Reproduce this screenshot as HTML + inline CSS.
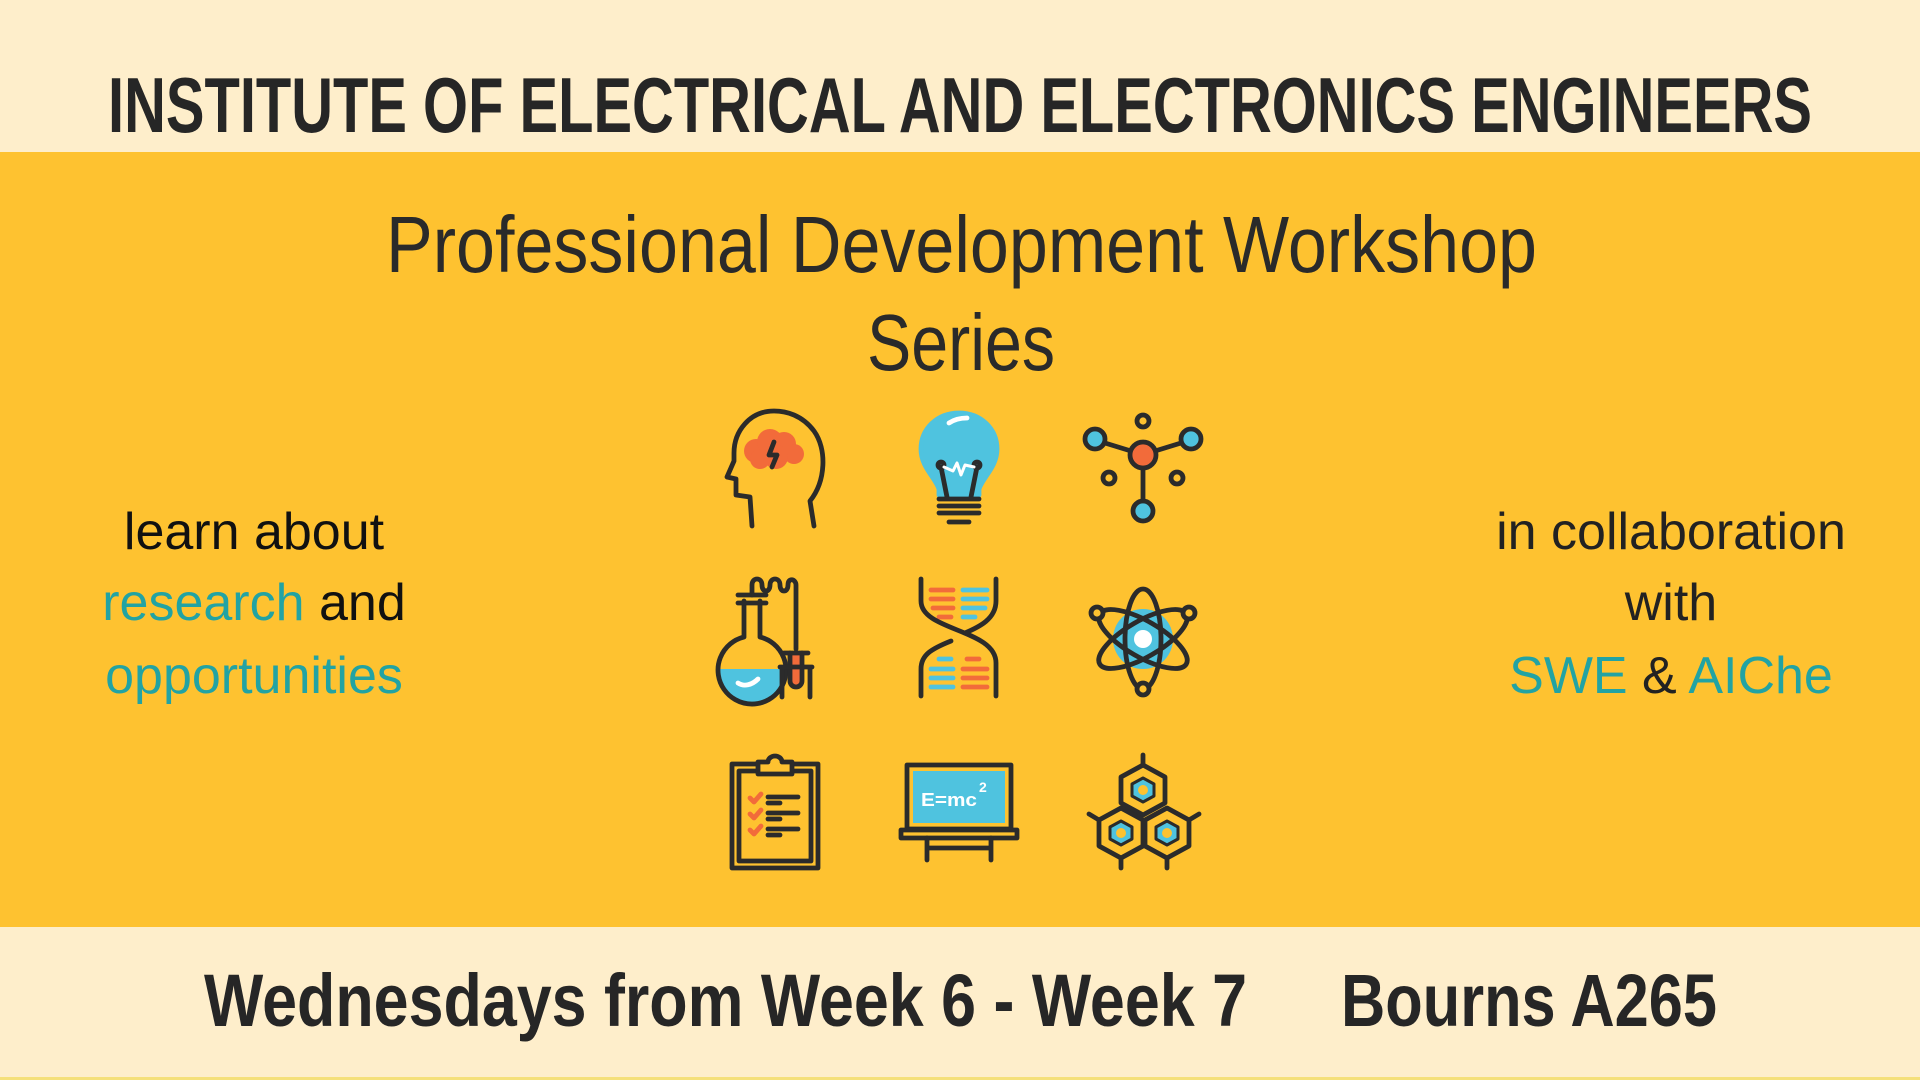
<!DOCTYPE html>
<html><head><meta charset="utf-8"><style>
html,body{margin:0;padding:0;width:1920px;height:1080px;overflow:hidden;background:#FEC230}
svg{display:block}
</style></head><body>
<svg width="1920" height="1080" viewBox="0 0 1920 1080" xmlns="http://www.w3.org/2000/svg" font-family="Liberation Sans, sans-serif">
<rect x="0" y="0" width="1920" height="152" fill="#FEEECB"/>
<rect x="0" y="152" width="1920" height="775" fill="#FEC230"/>
<rect x="0" y="927" width="1920" height="153" fill="#FEEECB"/>
<rect x="0" y="1077" width="1920" height="3" fill="#F5E07A"/>

<text x="108" y="132" font-size="78" font-weight="bold" fill="#262626" textLength="1704" lengthAdjust="spacingAndGlyphs">INSTITUTE OF ELECTRICAL AND ELECTRONICS ENGINEERS</text>
<text x="386" y="272" font-size="80" fill="#2a2a2a" textLength="1151" lengthAdjust="spacingAndGlyphs">Professional Development Workshop</text>
<text x="867" y="370" font-size="80" fill="#2a2a2a" textLength="188" lengthAdjust="spacingAndGlyphs">Series</text>

<g font-size="52" text-anchor="middle">
<text x="254" y="549" fill="#111">learn about</text>
<text x="254" y="620"><tspan fill="#22A3A3">research</tspan><tspan fill="#111"> and</tspan></text>
<text x="254" y="693" fill="#22A3A3">opportunities</text>
<text x="1671" y="549" fill="#222">in collaboration</text>
<text x="1671" y="620" fill="#222">with</text>
<text x="1671" y="693"><tspan fill="#22A3A3">SWE</tspan><tspan fill="#222"> &amp; </tspan><tspan fill="#22A3A3">AIChe</tspan></text>
</g>

<text x="204" y="1026" font-size="74" font-weight="bold" fill="#262626" textLength="1043" lengthAdjust="spacingAndGlyphs">Wednesdays from Week 6 - Week 7</text>
<text x="1341" y="1026" font-size="74" font-weight="bold" fill="#262626" textLength="376" lengthAdjust="spacingAndGlyphs">Bourns A265</text>

<g fill="none" stroke="#2b2b2b" stroke-width="4.8" stroke-linecap="round" stroke-linejoin="round">
<!-- head -->
<g transform="translate(714,409)">
 <g fill="#F26B3A" stroke="none">
  <circle cx="42" cy="42" r="12"/><circle cx="56" cy="33" r="13"/><circle cx="70" cy="35" r="12"/><circle cx="80" cy="45" r="10"/><circle cx="62" cy="48" r="12"/><circle cx="46" cy="50" r="10"/>
 </g>
 <path d="M60,33 L55,46 L63,46 L58,58"/>
 <path d="M100,117 L96,92 C112,72 113,40 100,22 C88,6 72,2 60,2 C36,2 20,22 20,44 L20,52 L13,68 L22,70 L22,86 L36,88 L38,117"/>
</g>
<!-- bulb -->
<g transform="translate(899,409)">
 <path d="M60,4 C38,4 22,20 22,40 C22,58 36,68 40,80 L40,86 L80,86 L80,80 C84,68 98,58 98,40 C98,20 82,4 60,4 Z" fill="#4FC3DF" stroke="#4FC3DF"/>
 <path d="M50,14 C56,10 62,9 68,9" stroke="#fff"/>
 <path d="M48,88 L42,58 M72,88 L78,58"/>
 <circle cx="42" cy="56" r="3"/><circle cx="78" cy="56" r="3"/>
 <path d="M45,58 L54,62 L58,54 L62,66 L66,56 L75,58" stroke="#fff" stroke-width="3"/>
 <path d="M40,90 L80,90 M40,97 L80,97 M40,104 L80,104 M50,113 L70,113"/>
</g>
<!-- molecule -->
<g transform="translate(1083,409)">
 <path d="M22,34 L48,42 M98,34 L72,42 M60,59 L60,92"/>
 <circle cx="60" cy="46" r="13" fill="#F26B3A"/>
 <circle cx="12" cy="30" r="10" fill="#4FC3DF"/><circle cx="108" cy="30" r="10" fill="#4FC3DF"/><circle cx="60" cy="102" r="10" fill="#4FC3DF"/>
 <circle cx="60" cy="12" r="6"/><circle cx="26" cy="69" r="6"/><circle cx="94" cy="69" r="6"/>
</g>
<!-- flask -->
<g transform="translate(714,579)">
 <path d="M4,90 A34,34 0 0 0 72,90 Z" fill="#4FC3DF" stroke="none"/>
 <path d="M30,22 L30,58 A34,34 0 1 0 46,58 L46,22"/>
 <path d="M24,16 L52,16 M24,24 L52,24"/>
 <path d="M38,16 L38,6 C38,-2 48,-2 48,6 C48,14 56,14 56,6 C56,-2 66,-2 66,6 C66,14 74,14 74,6 C74,-2 82,0 82,6 L82,70"/>
 <path d="M76,74 L76,102 A6,6 0 0 0 88,102 L88,74" fill="#F26B3A"/>
 <path d="M70,74 L94,74 M66,88 L98,88 M68,88 L68,118 M96,88 L96,118"/>
 <path d="M24,104 C30,108 38,106 44,100" stroke="#fff"/>
</g>
<!-- dna -->
<g transform="translate(899,579)">
 <g stroke="#F26B3A"><path d="M32,11 L54,11 M32,20 L54,20 M34,29 L54,29 M40,38 L52,38 M68,80 L80,80 M64,90 L88,90 M64,99 L88,99 M64,108 L88,108"/></g>
 <g stroke="#4FC3DF"><path d="M64,11 L88,11 M64,20 L88,20 M64,29 L86,29 M64,38 L76,38 M40,80 L52,80 M32,90 L54,90 M32,99 L54,99 M32,108 L54,108"/></g>
 <path d="M22,0 L22,22 C22,52 97,50 97,84 L97,117"/>
 <path d="M97,0 L97,22 C97,40 80,48 66,54 M52,62 C32,70 22,76 22,90 L22,117"/>
</g>
<!-- atom -->
<g transform="translate(1083,579)">
 <circle cx="60" cy="60" r="30" fill="#4FC3DF" stroke="none"/>
 <circle cx="60" cy="60" r="9" fill="#fff" stroke="none"/>
 <ellipse cx="60" cy="60" rx="18" ry="50"/>
 <ellipse cx="60" cy="60" rx="50" ry="18" transform="rotate(30 60 60)"/>
 <ellipse cx="60" cy="60" rx="50" ry="18" transform="rotate(-30 60 60)"/>
 <circle cx="14" cy="34" r="6" fill="#FEC230"/><circle cx="106" cy="34" r="6" fill="#FEC230"/><circle cx="60" cy="110" r="6" fill="#FEC230"/>
</g>
<!-- clipboard -->
<g transform="translate(714,752)">
 <rect x="18" y="12" width="86" height="104"/>
 <rect x="25" y="19" width="72" height="90"/>
 <path d="M44,22 L44,10 L54,10 A7,6 0 0 1 68,10 L78,10 L78,22 Z" fill="#FEC230"/>
 <g stroke="#F26B3A"><path d="M36,46 L40,50 L47,42 M36,62 L40,66 L47,58 M36,78 L40,82 L47,74"/></g>
 <path d="M54,45 L84,45 M54,51 L66,51 M54,61 L84,61 M54,67 L66,67 M54,77 L84,77 M54,83 L66,83"/>
</g>
<!-- chalkboard -->
<g transform="translate(899,752)">
 <rect x="8" y="13" width="104" height="64" fill="#FEC230"/>
 <rect x="14" y="19" width="92" height="52" fill="#4FC3DF" stroke="none"/>
 <text x="22" y="54" font-size="18" font-weight="bold" fill="#fff" stroke="none" textLength="56" lengthAdjust="spacingAndGlyphs">E=mc</text>
 <text x="80" y="40" font-size="14" font-weight="bold" fill="#fff" stroke="none">2</text>
 <rect x="2" y="78" width="116" height="8"/>
 <path d="M28,86 L28,108 M92,86 L92,108 M28,96 L92,96"/>
</g>
<!-- hexagons -->
<g transform="translate(1083,752)">
 <path d="M60,13 L82,25 L82,51 L60,63 L38,51 L38,25 Z"/>
 <path d="M38,56 L60,68 L60,94 L38,106 L16,94 L16,68 Z"/>
 <path d="M84,56 L106,68 L106,94 L84,106 L62,94 L62,68 Z"/>
 <path d="M60,13 L60,3 M16,68 L6,62 M106,68 L116,62 M38,106 L38,116 M84,106 L84,116"/>
 <g fill="#4FC3DF" stroke="#2b2b2b" stroke-width="3">
 <path d="M60,26 L71,32 L71,44 L60,50 L49,44 L49,32 Z"/>
 <path d="M38,69 L49,75 L49,87 L38,93 L27,87 L27,75 Z"/>
 <path d="M84,69 L95,75 L95,87 L84,93 L73,87 L73,75 Z"/>
 </g>
 <g fill="#FEC230" stroke="none"><circle cx="60" cy="38" r="5"/><circle cx="38" cy="81" r="5"/><circle cx="84" cy="81" r="5"/></g>
</g>
</g>
</svg>
</body></html>
